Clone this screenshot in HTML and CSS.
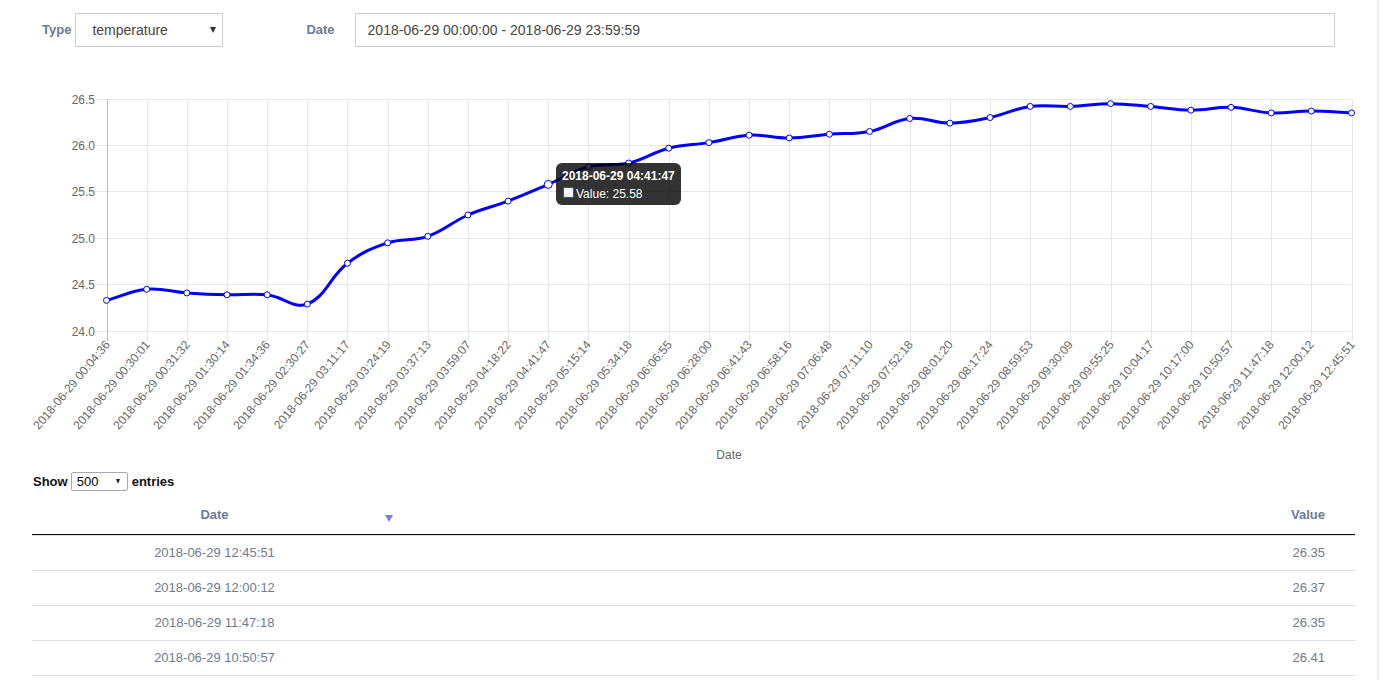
FILE: index.html
```html
<!DOCTYPE html>
<html>
<head>
<meta charset="utf-8">
<title>Sensor history</title>
<link rel="stylesheet" href="styles.css">
</head>
<body>
<div class="page">
  <div class="filters">
    <span class="label">Type</span>
    <div class="select">temperature<i class="caret"></i></div>
    <span class="label label-date">Date</span>
    <div class="input">2018-06-29 00:00:00 - 2018-06-29 23:59:59</div>
  </div>
  <div class="chart">
    <svg id="chart" width="1379" height="412" viewBox="0 60 1379 412" xmlns="http://www.w3.org/2000/svg"></svg>
  </div>
  <div class="length">
    <span class="strong">Show</span>
    <div class="mini-select">500<i class="caret"></i></div>
    <span class="strong">entries</span>
  </div>
  <table class="data">
    <thead>
      <tr>
        <th class="col-date">Date<i class="sort"></i></th>
        <th class="col-value">Value</th>
      </tr>
    </thead>
    <tbody>
      <tr><td class="col-date">2018-06-29 12:45:51</td><td class="col-value">26.35</td></tr>
      <tr><td class="col-date">2018-06-29 12:00:12</td><td class="col-value">26.37</td></tr>
      <tr><td class="col-date">2018-06-29 11:47:18</td><td class="col-value">26.35</td></tr>
      <tr><td class="col-date">2018-06-29 10:50:57</td><td class="col-value">26.41</td></tr>
    </tbody>
  </table>
</div>
<script src="chart.js"></script>
</body>
</html>
```

FILE: styles.css
```css
* { box-sizing: border-box; }
html, body { margin: 0; padding: 0; background: #fff; }
body { font-family: "Liberation Sans", Arial, sans-serif; color: #333; overflow: hidden; }
.page { width: 1379px; height: 680px; border-right: 2px solid #ededed; }

.filters { display: flex; align-items: flex-start; height: 60px; padding: 13px 0 0 42px; }
.label { font-size: 13px; font-weight: bold; color: #6b7a94; line-height: 34px; }
.label-date { margin-left: 83px; }
.select { position: relative; width: 148px; height: 34px; margin-left: 4px; padding-left: 16px; border: 1px solid #ccc; font-size: 14px; line-height: 32px; color: #444; }
.select .caret { position: absolute; right: 6px; top: 13px; width: 0; height: 0; border-left: 3px solid transparent; border-right: 3px solid transparent; border-top: 6px solid #333; }
.input { width: 980px; height: 34px; margin-left: 20px; padding-left: 12px; border: 1px solid #ccc; font-size: 14px; line-height: 32px; color: #444; }

.chart { height: 412px; }
.chart svg { display: block; }
.grid { stroke: #e6e6e6; stroke-width: 1; fill: none; }
.grid-zero { stroke: #bfbfbf; stroke-width: 1; fill: none; }
.tick { font-family: "Liberation Sans", Arial, sans-serif; font-size: 12px; fill: #666; }
.axis-title { font-family: "Liberation Sans", Arial, sans-serif; font-size: 12px; fill: #666; }
.line { fill: none; stroke: #0000ff; stroke-width: 3; stroke-linejoin: round; stroke-linecap: round; }
.point { fill: #fff; stroke: #0000ff; stroke-width: 1; }
.tip-bg { fill: rgba(0, 0, 0, 0.8); }
.tip-title { font-family: "Liberation Sans", Arial, sans-serif; font-size: 12px; font-weight: bold; fill: #fff; }
.tip-body { font-family: "Liberation Sans", Arial, sans-serif; font-size: 12px; fill: #fff; }
.tip-box { fill: #fff; stroke: #3b3bff; stroke-width: 1.2; }

.length { display: flex; align-items: center; height: 19px; padding-left: 33px; font-size: 13px; color: #111; }
.strong { font-weight: bold; }
.mini-select { position: relative; width: 57px; height: 19px; margin: 0 4px 0 3px; padding-left: 5px; border: 1px solid #a9a9a9; border-radius: 2px; font-size: 13px; line-height: 17px; color: #000; }
.mini-select .caret { position: absolute; right: 7px; top: 6px; width: 0; height: 0; border-left: 2.5px solid transparent; border-right: 2.5px solid transparent; border-top: 5px solid #222; }

.data { margin: 5px 0 0 32px; width: 1323px; border-collapse: separate; border-spacing: 0; font-size: 13px; }
.data th { position: relative; padding: 10px 10px 11px; line-height: 17px; font-weight: bold; color: #6b7a99; border-bottom: 1px solid #111; }
.data td { padding: 8px 10px; line-height: 18px; color: #6f7a8f; border-top: 1px solid #ddd; }
.data tbody tr:last-child td { border-bottom: 1px solid #ddd; }
.col-date { width: 365px; text-align: center; }
.col-value { text-align: right; padding-right: 30px !important; }
.sort { position: absolute; right: 4px; top: 19px; width: 0; height: 0; border-left: 4.5px solid transparent; border-right: 4.5px solid transparent; border-top: 7px solid #7b80d6; }
```

FILE: chart.js
```javascript
(function () {
  var NS = 'http://www.w3.org/2000/svg';
  var svg = document.getElementById('chart');
  function el(tag, attrs, text) {
    var e = document.createElementNS(NS, tag);
    for (var k in attrs) e.setAttribute(k, attrs[k]);
    if (text != null) e.textContent = text;
    svg.appendChild(e);
    return e;
  }
  var labels = ['00:04:36','00:30:01','00:31:32','01:30:14','01:34:36','02:30:27','03:11:17','03:24:19','03:37:13','03:59:07','04:18:22','04:41:47','05:15:14','05:34:18','06:06:55','06:28:00','06:41:43','06:58:16','07:06:48','07:11:10','07:52:18','08:01:20','08:17:24','08:59:53','09:30:09','09:55:25','10:04:17','10:17:00','10:50:57','11:47:18','12:00:12','12:45:51'];
  var values = [24.33,24.45,24.41,24.39,24.39,24.29,24.73,24.95,25.02,25.25,25.40,25.58,25.77,25.81,25.97,26.03,26.11,26.08,26.12,26.15,26.29,26.24,26.30,26.42,26.42,26.45,26.42,26.38,26.41,26.35,26.37,26.35];
  var L = 106.5, R = 1351.5, T = 99, B = 331;
  var step = (R - L) / (labels.length - 1);
  function X(i) { return L + i * step; }
  function Y(v) { return B - (v - 24) / 2.5 * (B - T); }

  // horizontal grid + y labels
  for (var t = 0; t <= 5; t++) {
    var v = 24 + t * 0.5;
    var y = Math.floor(Y(v)) + 0.5;
    el('line', { 'class': 'grid', x1: 96, y1: y, x2: R, y2: y });
    el('text', { 'class': 'tick', x: 95, y: y + 4, 'text-anchor': 'end' }, v.toFixed(1));
  }
  // vertical grid + x labels
  for (var i = 0; i < labels.length; i++) {
    var x = Math.round(X(i)) + 0.5;
    el('line', { 'class': i === 0 ? 'grid-zero' : 'grid', x1: x, y1: T, x2: x, y2: B + 10 });
    el('text', { 'class': 'tick', 'text-anchor': 'end', transform: 'translate(' + (x + 3) + ',' + 345 + ') rotate(-50)' }, '2018-06-29 ' + labels[i]);
  }
  el('text', { 'class': 'axis-title', x: 729, y: 459, 'text-anchor': 'middle' }, 'Date');

  // smooth line (Chart.js style spline, tension 0.4)
  var pts = values.map(function (v, i) { return { x: X(i), y: Y(v) }; });
  var cps = pts.map(function (p, i) {
    var prev = pts[i - 1] || p, next = pts[i + 1] || p;
    var d01 = Math.hypot(p.x - prev.x, p.y - prev.y);
    var d12 = Math.hypot(next.x - p.x, next.y - p.y);
    var s01 = d01 / (d01 + d12), s12 = d12 / (d01 + d12);
    if (isNaN(s01)) s01 = 0;
    if (isNaN(s12)) s12 = 0;
    var fa = 0.4 * s01, fb = 0.4 * s12;
    var c = {
      px: p.x - fa * (next.x - prev.x), py: p.y - fa * (next.y - prev.y),
      nx: p.x + fb * (next.x - prev.x), ny: p.y + fb * (next.y - prev.y)
    };
    c.py = Math.min(Math.max(c.py, T), B);
    c.ny = Math.min(Math.max(c.ny, T), B);
    return c;
  });
  var d = 'M' + pts[0].x + ',' + pts[0].y;
  for (var j = 1; j < pts.length; j++) {
    d += ' C' + cps[j - 1].nx.toFixed(2) + ',' + cps[j - 1].ny.toFixed(2) + ' ' +
      cps[j].px.toFixed(2) + ',' + cps[j].py.toFixed(2) + ' ' + pts[j].x.toFixed(2) + ',' + pts[j].y.toFixed(2);
  }
  el('path', { 'class': 'line', d: d });
  pts.forEach(function (p, i) {
    el('circle', { 'class': 'point', cx: p.x, cy: p.y, r: i === 11 ? 4 : 3 });
  });

  // tooltip
  el('rect', { 'class': 'tip-bg', x: 556, y: 163, width: 125, height: 42, rx: 6, ry: 6 });
  el('text', { 'class': 'tip-title', x: 562, y: 180 }, '2018-06-29 04:41:47');
  el('rect', { 'class': 'tip-box', x: 563.5, y: 187.5, width: 10, height: 10 });
  el('text', { 'class': 'tip-body', x: 576, y: 197.5 }, 'Value: 25.58');
})();
```
